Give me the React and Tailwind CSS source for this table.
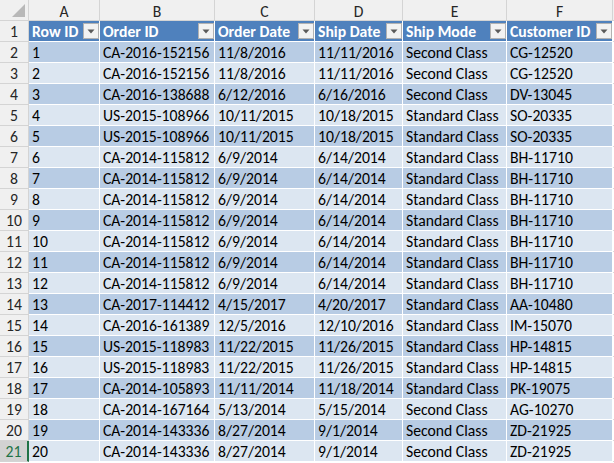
import React from 'react'

const rows = [
  [1, 'CA-2016-152156', '11/8/2016', '11/11/2016', 'Second Class', 'CG-12520'],
  [2, 'CA-2016-152156', '11/8/2016', '11/11/2016', 'Second Class', 'CG-12520'],
  [3, 'CA-2016-138688', '6/12/2016', '6/16/2016', 'Second Class', 'DV-13045'],
  [4, 'US-2015-108966', '10/11/2015', '10/18/2015', 'Standard Class', 'SO-20335'],
  [5, 'US-2015-108966', '10/11/2015', '10/18/2015', 'Standard Class', 'SO-20335'],
  [6, 'CA-2014-115812', '6/9/2014', '6/14/2014', 'Standard Class', 'BH-11710'],
  [7, 'CA-2014-115812', '6/9/2014', '6/14/2014', 'Standard Class', 'BH-11710'],
  [8, 'CA-2014-115812', '6/9/2014', '6/14/2014', 'Standard Class', 'BH-11710'],
  [9, 'CA-2014-115812', '6/9/2014', '6/14/2014', 'Standard Class', 'BH-11710'],
  [10, 'CA-2014-115812', '6/9/2014', '6/14/2014', 'Standard Class', 'BH-11710'],
  [11, 'CA-2014-115812', '6/9/2014', '6/14/2014', 'Standard Class', 'BH-11710'],
  [12, 'CA-2014-115812', '6/9/2014', '6/14/2014', 'Standard Class', 'BH-11710'],
  [13, 'CA-2017-114412', '4/15/2017', '4/20/2017', 'Standard Class', 'AA-10480'],
  [14, 'CA-2016-161389', '12/5/2016', '12/10/2016', 'Standard Class', 'IM-15070'],
  [15, 'US-2015-118983', '11/22/2015', '11/26/2015', 'Standard Class', 'HP-14815'],
  [16, 'US-2015-118983', '11/22/2015', '11/26/2015', 'Standard Class', 'HP-14815'],
  [17, 'CA-2014-105893', '11/11/2014', '11/18/2014', 'Standard Class', 'PK-19075'],
  [18, 'CA-2014-167164', '5/13/2014', '5/15/2014', 'Second Class', 'AG-10270'],
  [19, 'CA-2014-143336', '8/27/2014', '9/1/2014', 'Second Class', 'ZD-21925'],
  [20, 'CA-2014-143336', '8/27/2014', '9/1/2014', 'Second Class', 'ZD-21925'],
]

const letters = ['A', 'B', 'C', 'D', 'E', 'F']
const headers = ['Row ID', 'Order ID', 'Order Date', 'Ship Date', 'Ship Mode', 'Customer ID']
const cols = 'grid-cols-[29px_71px_115px_100px_88px_104px_106px_1fr]'

function FilterButton() {
  return (
    <div className="absolute right-0 top-[2px] w-4 h-4 bg-[#f2f2f2] border border-[#b2b2b2] flex items-center justify-center">
      <svg width="8" height="5" viewBox="0 0 8 5">
        <path d="M0.5 0.5 L7.5 0.5 L4 4.5 Z" fill="#5a5a5a" />
      </svg>
    </div>
  )
}

export default function App() {
  return (
    <div
      className="w-[614px] h-[463px] overflow-hidden bg-white text-[15.7px] text-black"
      style={{ fontFamily: 'Calibri, Carlito, Lato, sans-serif' }}
    >
      <div className={`grid ${cols} auto-rows-[21px]`}>
        {/* Corner */}
        <div className="relative bg-[#f0f0f0] border-r border-b border-[#d4d4d4]">
          <svg className="absolute right-[3px] bottom-[3px]" width="13" height="13" viewBox="0 0 13 13">
            <path d="M13 0 L13 13 L0 13 Z" fill="#b8b8b8" />
          </svg>
        </div>
        {letters.map((l) => (
          <div key={l} className="bg-[#f0f0f0] border-r border-b border-[#d4d4d4] flex justify-center pt-[3px] leading-[18px] text-[#262626]">
            {l}
          </div>
        ))}
        <div className="bg-[#f0f0f0] border-b border-[#d4d4d4]" />

        {/* Header row */}
        <div className="bg-[#f0f0f0] border-r border-b border-[#d4d4d4] flex justify-center pt-[2px] leading-[18px] text-[#262626]">1</div>
        {headers.map((h) => (
          <div key={h} className="relative bg-[#4f81bd] border-r border-b border-white text-white font-bold pl-[3px] pt-[2px] leading-[18px] whitespace-nowrap">
            {h}
            <FilterButton />
          </div>
        ))}
        <div className="border-b border-[#d9d9d9]" />

        {rows.map((r, i) => {
          const band = i % 2 === 0 ? 'bg-[#b8cce4]' : 'bg-[#dce6f1]'
          const last = i === rows.length - 1
          return (
            <React.Fragment key={i}>
              <div
                className={
                  last
                    ? 'bg-[#d2d2d2] border-r-2 border-r-[#217346] border-b border-b-[#d4d4d4] flex justify-center pt-[2px] leading-[18px] text-[#217346]'
                    : 'bg-[#f0f0f0] border-r border-b border-[#d4d4d4] flex justify-center pt-[2px] leading-[18px] text-[#262626]'
                }
              >
                {i + 2}
              </div>
              {r.map((v, j) => (
                <div key={j} className={`${band} border-r border-b border-white pl-[3px] pt-[2px] leading-[18px] whitespace-nowrap overflow-hidden`}>
                  {v}
                </div>
              ))}
              <div className="border-b border-[#d9d9d9]" />
            </React.Fragment>
          )
        })}
      </div>
    </div>
  )
}
